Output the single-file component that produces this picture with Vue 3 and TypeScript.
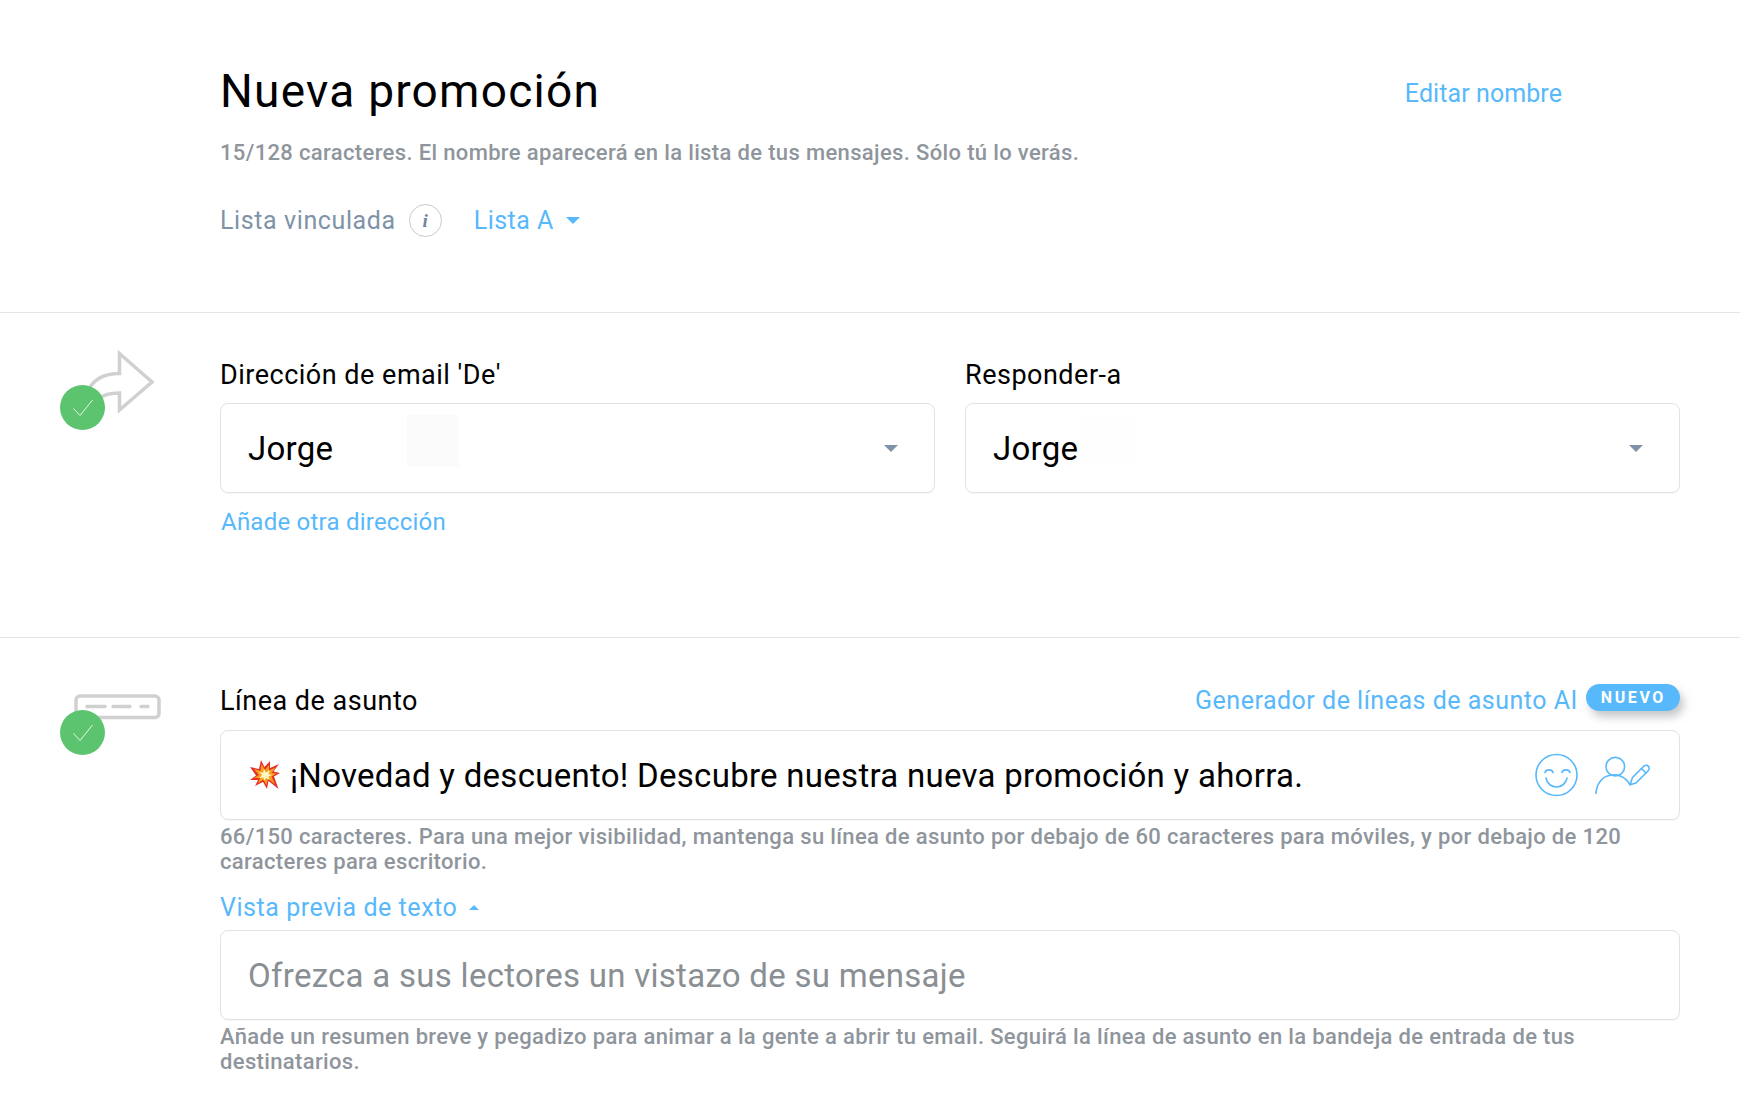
<template>
  <div class="page">
    <header class="head">
      <div class="head-top">
        <h1 class="title">Nueva promoción</h1>
        <a class="link edit">Editar nombre</a>
      </div>
      <p class="hint name-hint">15/128 caracteres. El nombre aparecerá en la lista de tus mensajes. Sólo tú lo verás.</p>
      <div class="list-row">
        <span class="list-label">Lista vinculada</span>
        <span class="info">i</span>
        <a class="link list-link">Lista A<span class="caret blue"></span></a>
      </div>
    </header>

    <section class="section from">
      <div class="side">
        <svg class="art arrow" width="70" height="70" viewBox="0 0 70 70" fill="none">
          <path d="M2 40C8 31 18 26.500 31.500 26.500V6.500L64 35 31.500 63V46C24 46 16 47 10 52" stroke="#d0d0d0" stroke-width="3.500" />
        </svg>
        <span class="ok">
          <svg width="22" height="18" viewBox="0 0 22 18" fill="none"><path d="M1.500 9.500 8 16.500 20.500 1" stroke="#e6f6e8" stroke-width="1" /></svg>
        </span>
      </div>
      <div class="main">
        <div class="two">
          <div>
            <label class="label">Dirección de email 'De'</label>
            <div class="box select">
              <span class="value">Jorge</span>
              <span class="mask"></span>
              <span class="caret gray"></span>
            </div>
            <a class="link add">Añade otra dirección</a>
          </div>
          <div>
            <label class="label">Responder-a</label>
            <div class="box select">
              <span class="value">Jorge</span>
              <span class="mask faint"></span>
              <span class="caret gray"></span>
            </div>
          </div>
        </div>
      </div>
    </section>

    <section class="section subject">
      <div class="side">
        <svg class="art bar" width="88" height="26" viewBox="0 0 88 26" fill="none">
          <rect x="2" y="2" width="83" height="21.500" rx="4" stroke="#d0d0d0" stroke-width="3.500" />
          <path d="M13 12.500H31M39 12.500H56M67 12.500H74" stroke="#d0d0d0" stroke-width="3.500" stroke-linecap="round" />
        </svg>
        <span class="ok">
          <svg width="22" height="18" viewBox="0 0 22 18" fill="none"><path d="M1.500 9.500 8 16.500 20.500 1" stroke="#e6f6e8" stroke-width="1" /></svg>
        </span>
      </div>
      <div class="main">
        <div class="label-row">
          <label class="label">Línea de asunto</label>
          <div class="ai">
            <a class="link">Generador de líneas de asunto AI</a>
            <span class="badge">NUEVO</span>
          </div>
        </div>
        <div class="box subject-box">
          <svg class="boom" width="30" height="30" viewBox="0 0 30 30">
            <path d="M11 0 14.500 7 20 1 20 8 29 4 23.500 11.500 30 13 24 16.500 28.500 29 18.500 21 17 29 13 22 5 26 8 20 0 20 6 15.500 0 7 9 9Z" fill="#e4322b" />
            <path d="M11.500 4 15 10 19 5 19 10.500 25.500 7.500 21.500 13 26.500 13.500 21.500 16.500 25 24.500 18 18.500 16.500 25 13.500 19.500 8 23 10 18 4 18 9 15 4 9 10.500 11Z" fill="#f9a11b" />
            <path d="M14 9 16 12.500 20 10 18.500 14 22 15 18.500 16.500 19.500 20 16 18 14 21 13.500 17.500 9.500 18 12 15 9 11.500 13 13Z" fill="#fff6c4" />
          </svg>
          <span class="value">¡Novedad y descuento! Descubre nuestra nueva promoción y ahorra.</span>
          <div class="tools">
            <svg width="44" height="44" viewBox="0 0 44 44" fill="none" stroke="#57b8fb" stroke-width="1.600" stroke-linecap="round">
              <circle cx="21.500" cy="22" r="20.500" />
              <path d="M10 19.500C11 16 17 16 18 19.500M27 19.500C28 16 34 16 35 19.500" />
              <path d="M11 25C13 37 30 37 32 25" />
            </svg>
            <svg width="56" height="40" viewBox="0 0 56 40" fill="none" stroke="#57b8fb" stroke-width="1.600" stroke-linecap="round" stroke-linejoin="round">
              <circle cx="20.300" cy="11.700" r="9.300" />
              <path d="M1 38.500C1.500 28 8 21 16 20.300 22 19 30 21 35 29.700" />
              <path d="M35 29.700 37.500 22.500 49 11C51 9.500 53 10.500 54 12 55 14 54 15 53 16L41 28Z" />
              <path d="M46.500 13.500 51 18" />
            </svg>
          </div>
        </div>
        <p class="hint">66/150 caracteres. Para una mejor visibilidad, mantenga su línea de asunto por debajo de 60 caracteres para móviles, y por debajo de 120 caracteres para escritorio.</p>
        <a class="link preview-link">Vista previa de texto<span class="caret blue small"></span></a>
        <div class="box">
          <span class="value placeholder">Ofrezca a sus lectores un vistazo de su mensaje</span>
        </div>
        <p class="hint">Añade un resumen breve y pegadizo para animar a la gente a abrir tu email. Seguirá la línea de asunto en la bandeja de entrada de tus destinatarios.</p>
      </div>
    </section>
  </div>
</template>

<script setup lang="ts">
</script>

<style>
html, body {
  margin: 0;
  background: #fff;
}
</style>

<style scoped>
.page {
  width: 1740px;
  height: 1116px;
  overflow: hidden;
  font-family: Roboto, "Liberation Sans", sans-serif;
  color: #000;
  box-sizing: border-box;
}

.head {
  height: 313px;
  box-sizing: border-box;
  padding: 62px 178px 0 220px;
  border-bottom: 1px solid #e4e4e4;
}

.head-top {
  display: flex;
  justify-content: space-between;
  align-items: center;
}

.title {
  margin: 0;
  font-size: 46px;
  line-height: 58px;
  font-weight: 400;
  letter-spacing: 1.25px;
}

.link {
  color: #57b8fb;
  font-size: 25px;
  letter-spacing: 0.5px;
}

.edit {
  margin-top: 4px;
  letter-spacing: 0.08px;
}

.hint {
  margin: 4px 0 0;
  color: #8f959c;
  font-size: 22px;
  line-height: 25px;
  font-weight: 500;
  letter-spacing: 0.35px;
}

.name-hint {
  margin-top: 20px;
}

.list-row {
  display: flex;
  align-items: center;
  margin-top: 39px;
}

.list-label {
  color: #7e93a7;
  font-size: 25px;
  letter-spacing: 0.6px;
}

.info {
  width: 33px;
  height: 33px;
  box-sizing: border-box;
  margin-left: 13px;
  border: 1px solid #c9c9c9;
  border-radius: 50%;
  display: flex;
  align-items: center;
  justify-content: center;
  color: #71869a;
  font: italic 700 19px "Liberation Serif", serif;
}

.list-link {
  margin-left: 32px;
  display: flex;
  align-items: center;
}

.caret {
  display: inline-block;
  width: 0;
  height: 0;
  border-left: 7px solid transparent;
  border-right: 7px solid transparent;
  border-top: 7px solid #7e93a7;
}

.caret.blue {
  border-top-color: #57b8fb;
  margin-left: 12px;
}

.caret.small {
  border-left-width: 5px;
  border-right-width: 5px;
  border-top-width: 0;
  border-bottom: 5px solid #57b8fb;
}

.section {
  display: flex;
  border-bottom: 1px solid #e4e4e4;
}

.section.from {
  height: 325px;
  box-sizing: border-box;
  padding-top: 46px;
}

.section.subject {
  border-bottom: none;
  padding-top: 47px;
}

.side {
  width: 220px;
  flex: none;
  position: relative;
}

.art {
  position: absolute;
}

.art.arrow {
  left: 88px;
  top: -12px;
}

.art.bar {
  left: 74px;
  top: 9px;
}

.ok {
  position: absolute;
  left: 60px;
  top: 26px;
  width: 45px;
  height: 45px;
  border-radius: 50%;
  background: #5cc46f;
  display: flex;
  align-items: center;
  justify-content: center;
}

.subject .ok {
  top: 25px;
}

.main {
  width: 1460px;
}

.two {
  display: grid;
  grid-template-columns: 715px 715px;
  gap: 30px;
}

.label {
  display: block;
  font-size: 27px;
  line-height: 32px;
  letter-spacing: 0.5px;
}

.box {
  height: 90px;
  box-sizing: border-box;
  margin-top: 12px;
  padding: 0 27px;
  border: 1px solid #e2e2e2;
  border-radius: 8px;
  display: flex;
  align-items: center;
  position: relative;
  box-shadow: 0 1px 1px rgba(0, 0, 0, 0.04);
}

.value {
  font-size: 33px;
  letter-spacing: 0.28px;
}

.select {
  justify-content: space-between;
}

.select .caret {
  margin-right: 9px;
}

.mask {
  position: absolute;
  left: 186px;
  top: 11px;
  width: 52px;
  height: 52px;
  background: #fbfbfb;
}

.mask.faint {
  left: 116px;
  background: #fefefe;
}

.add {
  display: block;
  margin-top: 15px;
  margin-left: 1px;
  font-size: 24px;
  letter-spacing: 0.23px;
}

.label-row {
  display: flex;
  justify-content: space-between;
  align-items: center;
}

.ai {
  display: flex;
  align-items: center;
  gap: 8px;
  margin-top: -1px;
}

.badge {
  height: 27px;
  margin-top: -6px;
  padding: 0 14px 0 15px;
  border-radius: 14px;
  background: #57b8fb;
  color: #fff;
  font-size: 16px;
  line-height: 27px;
  font-weight: 700;
  letter-spacing: 2.6px;
  box-shadow: 4px 6px 8px rgba(90, 100, 110, 0.35);
}

.subject-box {
  gap: 10px;
  margin-top: 13px;
  padding-left: 29px;
}

.boom {
  flex: none;
}

.tools {
  margin-left: auto;
  margin-right: 1px;
  display: flex;
  align-items: center;
  gap: 16px;
}

.preview-link {
  display: flex;
  align-items: center;
  margin-top: 19px;
  letter-spacing: 0.55px;
}

.preview-link + .box {
  margin-top: 8px;
}

.placeholder {
  color: #8a8f94;
}
</style>
